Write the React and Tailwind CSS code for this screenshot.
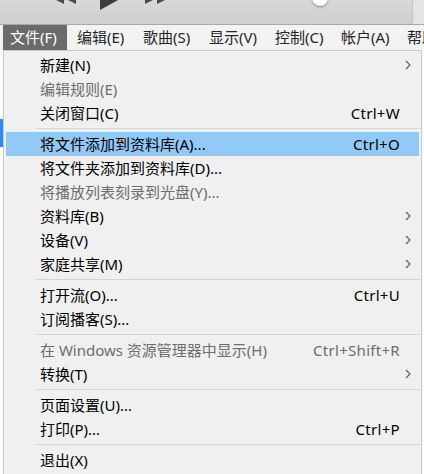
import React from 'react';

const menuBar = ['文件(F)', '编辑(E)', '歌曲(S)', '显示(V)', '控制(C)', '帐户(A)', '帮助(H)'];

const items = [
  { label: '新建(N)', arrow: true },
  { label: '编辑规则(E)', disabled: true },
  { label: '关闭窗口(C)', shortcut: 'Ctrl+W' },
  'sep',
  { label: '将文件添加到资料库(A)...', shortcut: 'Ctrl+O', active: true },
  { label: '将文件夹添加到资料库(D)...' },
  { label: '将播放列表刻录到光盘(Y)...', disabled: true },
  { label: '资料库(B)', arrow: true },
  { label: '设备(V)', arrow: true },
  { label: '家庭共享(M)', arrow: true },
  'sep',
  { label: '打开流(O)...', shortcut: 'Ctrl+U' },
  { label: '订阅播客(S)...' },
  'sep',
  { label: '在 Windows 资源管理器中显示(H)', shortcut: 'Ctrl+Shift+R', disabled: true },
  { label: '转换(T)', arrow: true },
  'sep',
  { label: '页面设置(U)...' },
  { label: '打印(P)...', shortcut: 'Ctrl+P' },
  'sep',
  { label: '退出(X)' },
];

function Chevron() {
  return (
    <svg width="6" height="10" viewBox="0 0 6 10" className="ml-[5px]">
      <polyline points="1,1 5,5 1,9" fill="none" stroke="#5a5a5a" strokeWidth="1.1" />
    </svg>
  );
}

function Transport() {
  return (
    <div className="flex items-start h-full">
      {/* prev */}
      <svg width="24" height="12" viewBox="0 0 24 12" className="ml-[52px] -mt-[8px] shrink-0">
        <polygon points="12,0 12,12 0,6" fill="#4a4a4a" />
        <polygon points="24,0 24,12 12,6" fill="#4a4a4a" />
      </svg>
      {/* play */}
      <svg width="20" height="22" viewBox="0 0 20 22" className="ml-[24px] -mt-[12px] shrink-0">
        <polygon points="0,0 0,22 20,11" fill="#3c3c3c" />
      </svg>
      {/* next */}
      <svg width="24" height="12" viewBox="0 0 24 12" className="ml-[25px] -mt-[8px] shrink-0">
        <polygon points="0,0 0,12 12,6" fill="#4a4a4a" />
        <polygon points="12,0 12,12 24,6" fill="#4a4a4a" />
      </svg>
    </div>
  );
}

export default function App() {
  return (
    <div className="w-[424px] h-[474px] overflow-hidden bg-[#f3f3f3] font-['Noto_Sans','Noto_Sans_CJK_SC',sans-serif]">
      {/* Toolbar */}
      <div className="h-[25px] flex overflow-hidden border-b border-[#a9a9a9] bg-gradient-to-b from-[#d8d8d8] to-[#cfcfcf]">
        <div className="flex-1 relative">
          <Transport />
          <div className="absolute left-[312px] -top-[10px] w-[16px] h-[16px] rounded-full bg-white shadow-[0_1px_2px_rgba(0,0,0,0.4)]" />
        </div>
        <div className="w-[12px] bg-[#e4e4e4] border-l border-[#c4c4c4]" />
      </div>

      {/* Menu bar */}
      <div className="h-[25px] flex items-center overflow-hidden bg-[#f3f3f3] text-[15px] text-[#262626] pl-[3px] whitespace-nowrap">
        {menuBar.map((m, i) => (
          <div
            key={m}
            className={
              i === 0
                ? 'h-full shrink-0 flex items-center pl-[7px] w-[64px] bg-[#6b6b6b] text-white'
                : 'h-full shrink-0 flex items-center pl-[10px] w-[66px]'
            }
          >
            {m}
          </div>
        ))}
      </div>

      {/* Body: window strip + dropdown */}
      <div className="flex h-[424px]">
        <div className="w-[3px] shrink-0 bg-[#fafafa] flex flex-col">
          <div className="h-[69px]" />
          <div className="h-[28px] bg-[#2b8bf5]" />
        </div>
        <div className="w-[419px] shrink-0 border border-b-0 border-[#c9c9c9] bg-[#f0f0f0] pt-[2px] text-[15px] text-black">
          {items.map((it, i) =>
            it === 'sep' ? (
              <div key={i} className="h-[7px] flex items-center pl-[32px] pr-[1px]">
                <div className="h-px w-full bg-[#d5d5d5]" />
              </div>
            ) : (
              <div
                key={i}
                className={
                  'h-[24px] mx-[2px] flex items-center pl-[34px] whitespace-nowrap ' +
                  (it.active ? 'bg-[#91c9f7] ' : '') +
                  (it.disabled ? 'text-[#6d6d6d]' : 'text-black')
                }
              >
                <span className="flex-1 leading-none">{it.label}</span>
                {it.shortcut && <span className="leading-none tracking-[0.3px]">{it.shortcut}</span>}
                <div className="w-[19px] flex items-center">{it.arrow && <Chevron />}</div>
              </div>
            )
          )}
        </div>
        <div className="w-[2px] shrink-0 bg-[#fafafa]" />
      </div>
    </div>
  );
}
